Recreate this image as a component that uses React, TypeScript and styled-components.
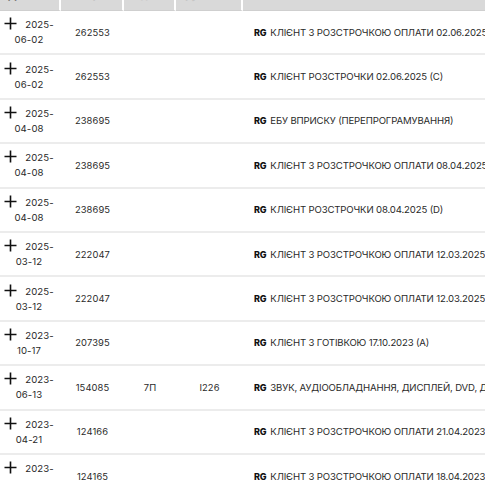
import React from "react";
import styled, { createGlobalStyle } from "styled-components";

const Global = createGlobalStyle`
  html, body { margin: 0; padding: 0; background: #fff; overflow: hidden; }
  body { font-family: Inter, "Noto Sans", sans-serif; color: #222; }
`;

const Viewport = styled.div`
  width: 485px;
  height: 480px;
  overflow: hidden;
`;

const Table = styled.table`
  border-collapse: separate;
  border-spacing: 0;
  table-layout: fixed;
  width: 760px;
  margin-top: -17px;
`;

const HeadCell = styled.th<{ $w: number }>`
  width: ${(p) => p.$w}px;
  height: 28px;
  padding: 0 4px 9px;
  background: #d9d9d9;
  border-right: 2px solid #fff;
  border-bottom: 1px solid #cfcfcf;
  font-size: 10px;
  font-weight: 700;
  color: #c6c6c6;
  text-align: left;
  vertical-align: bottom;
  box-sizing: border-box;
  &:first-child { color: #111; padding-left: 8px; }
`;

const Row = styled.tr`
  height: 44.4px;
`;

const Cell = styled.td<{ $align?: string }>`
  padding: 0 4px;
  border-bottom: 2px solid #ececec;
  font-size: 9.4px;
  letter-spacing: 0.1px;
  color: #2a2a2a;
  text-align: ${(p) => p.$align || "center"};
  vertical-align: middle;
  white-space: nowrap;
  box-sizing: border-box;
`;

const DateCell = styled(Cell)`
  white-space: normal;
  line-height: 15px;
  padding: 0 6px 0 3px;
  font-size: 9.6px;
`;

const Plus = styled.svg`
  width: 13px;
  height: 13px;
  margin-right: 8px;
  vertical-align: -2px;
`;

const DescCell = styled(Cell)`
  text-align: left;
  padding-left: 11px;
  font-size: 9.6px;
  letter-spacing: -0.15px;
  text-transform: uppercase;
`;

const Brand = styled.b`
  font-weight: 800;
  font-size: 9px;
  letter-spacing: -0.2px;
  margin-right: 4px;
  color: #111;
`;

type R = { date: string; num: string; c3?: string; c4?: string; desc: string };

const rows: R[] = [
  { date: "2025-06-02", num: "262553", desc: "КЛІЄНТ З РОЗСТРОЧКОЮ ОПЛАТИ 02.06.2025 (C)" },
  { date: "2025-06-02", num: "262553", desc: "КЛІЄНТ РОЗСТРОЧКИ 02.06.2025 (C)" },
  { date: "2025-04-08", num: "238695", desc: "ЕБУ ВПРИСКУ (ПЕРЕПРОГРАМУВАННЯ)" },
  { date: "2025-04-08", num: "238695", desc: "КЛІЄНТ З РОЗСТРОЧКОЮ ОПЛАТИ 08.04.2025 (D)" },
  { date: "2025-04-08", num: "238695", desc: "КЛІЄНТ РОЗСТРОЧКИ 08.04.2025 (D)" },
  { date: "2025-03-12", num: "222047", desc: "КЛІЄНТ З РОЗСТРОЧКОЮ ОПЛАТИ 12.03.2025 (A)" },
  { date: "2025-03-12", num: "222047", desc: "КЛІЄНТ З РОЗСТРОЧКОЮ ОПЛАТИ 12.03.2025 (B)" },
  { date: "2023-10-17", num: "207395", desc: "КЛІЄНТ З ГОТІВКОЮ 17.10.2023 (A)" },
  { date: "2023-06-13", num: "154085", c3: "7П", c4: "I226", desc: "ЗВУК, АУДІООБЛАДНАННЯ, ДИСПЛЕЙ, DVD, ДИНАМІКИ" },
  { date: "2023-04-21", num: "124166", desc: "КЛІЄНТ З РОЗСТРОЧКОЮ ОПЛАТИ 21.04.2023 (A)" },
  { date: "2023-04-18", num: "124165", desc: "КЛІЄНТ З РОЗСТРОЧКОЮ ОПЛАТИ 18.04.2023 (A)" },
];

const PlusIcon = () => (
  <Plus viewBox="0 0 13 13">
    <path d="M6.5 0.5V12.5M0.5 6.5H12.5" stroke="#111" strokeWidth="1.6" fill="none" />
  </Plus>
);

export default function App() {
  return (
    <Viewport>
      <Global />
      <Table>
        <thead>
          <tr>
            <HeadCell $w={61}>Дата</HeadCell>
            <HeadCell $w={63}>Номер</HeadCell>
            <HeadCell $w={52}>Код</HeadCell>
            <HeadCell $w={67}>Група</HeadCell>
            <HeadCell $w={517}>Опис</HeadCell>
          </tr>
        </thead>
        <tbody>
          {rows.map((r, i) => {
            const [y, ...rest] = r.date.split("-");
            return (
              <Row key={i}>
                <DateCell>
                  <PlusIcon />
                  {y}-<br />
                  {rest.join("-")}
                </DateCell>
                <Cell>{r.num}</Cell>
                <Cell>{r.c3 || ""}</Cell>
                <Cell>{r.c4 || ""}</Cell>
                <DescCell>
                  <Brand>RG</Brand>
                  {r.desc}
                </DescCell>
              </Row>
            );
          })}
        </tbody>
      </Table>
    </Viewport>
  );
}
